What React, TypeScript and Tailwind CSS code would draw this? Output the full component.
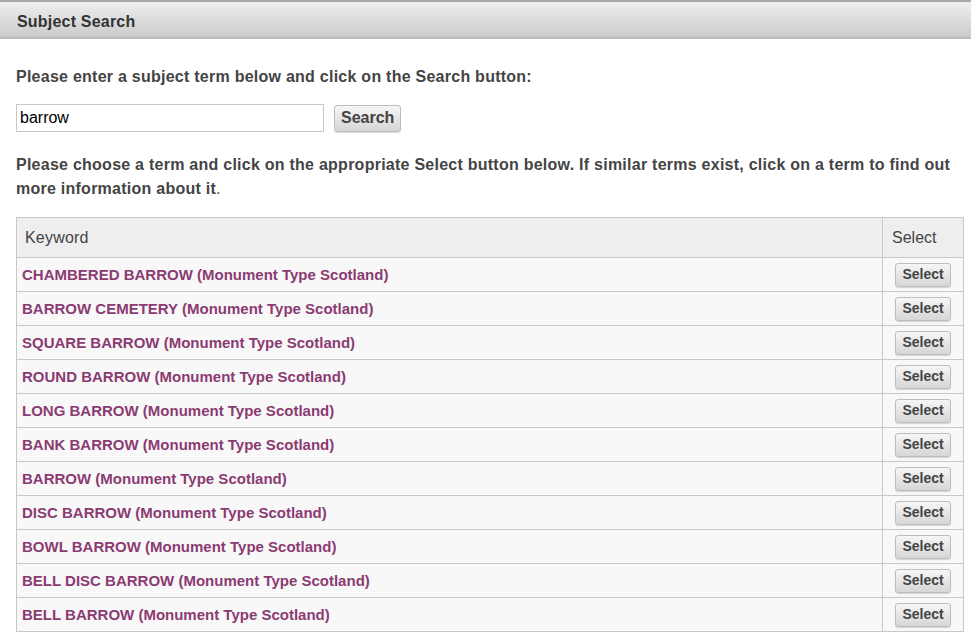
import React from "react";

const terms = [
  "CHAMBERED BARROW",
  "BARROW CEMETERY",
  "SQUARE BARROW",
  "ROUND BARROW",
  "LONG BARROW",
  "BANK BARROW",
  "BARROW",
  "DISC BARROW",
  "BOWL BARROW",
  "BELL DISC BARROW",
  "BELL BARROW",
];

const font = { fontFamily: '"Liberation Sans", Arial, sans-serif' };

function GreyButton({ children, className }: { children: React.ReactNode; className?: string }) {
  return (
    <button
      className={
        "rounded-[3px] border border-[#bdbdbd] bg-gradient-to-b from-[#f6f6f6] to-[#d6d6d6] font-bold text-[#444] shadow-[0_1px_1px_rgba(0,0,0,0.15)] " +
        (className ?? "")
      }
    >
      {children}
    </button>
  );
}

export default function App() {
  return (
    <div className="min-h-screen w-[971px] bg-white text-[#444]" style={font}>
      <div className="flex h-[39px] items-center border-t-2 border-[#a9a9a9] bg-gradient-to-b from-[#efefef] to-[#c9c9c9] pl-[17px] pt-[3px] shadow-[inset_0_-2px_0_#bcbcbc]">
        <h2 className="text-[16px] font-bold tracking-[0.2px] text-[#333]">Subject Search</h2>
      </div>

      <div className="pl-[16px] pr-[7px]">
        <p className="mt-[26px] text-[16px] font-bold leading-[24px] tracking-[0.25px]">
          Please enter a subject term below and click on the Search button:
        </p>

        <div className="mt-[15px] flex items-center gap-[10px]">
          <input
            defaultValue="barrow"
            className="h-[28px] w-[308px] border border-[#c8c8c8] px-[3px] text-[16px] text-black outline-none"
          />
          <GreyButton className="h-[27px] px-[6px] text-[16px]">Search</GreyButton>
        </div>

        <p className="mt-[21px] text-[16px] font-bold leading-[24px] tracking-[0.25px]">
          Please choose a term and click on the appropriate Select button below. If similar terms exist, click on a
          term to find out more information about it<span className="font-normal">.</span>
        </p>

        <table className="mt-[16px] w-full border-collapse border border-[#c8c8c8]">
          <thead>
            <tr className="h-[40px] bg-[#eeeeee]">
              <th className="border border-[#c8c8c8] pl-[8px] text-left text-[16px] font-normal tracking-[0.2px]">
                Keyword
              </th>
              <th className="w-[81px] border border-[#c8c8c8] pl-[9px] text-left text-[16px] font-normal">Select</th>
            </tr>
          </thead>
          <tbody>
            {terms.map((term) => (
              <tr key={term} className="h-[34px] bg-[#f8f8f8]">
                <td className="border border-[#c8c8c8] pl-[5px]">
                  <a href="#" className="text-[15px] font-bold text-[#8b3b72]">
                    {term} (Monument Type Scotland)
                  </a>
                </td>
                <td className="border border-[#c8c8c8] pl-[12px]">
                  <GreyButton className="h-[24px] w-[56px] text-[14px]">Select</GreyButton>
                </td>
              </tr>
            ))}
          </tbody>
        </table>
      </div>
    </div>
  );
}
